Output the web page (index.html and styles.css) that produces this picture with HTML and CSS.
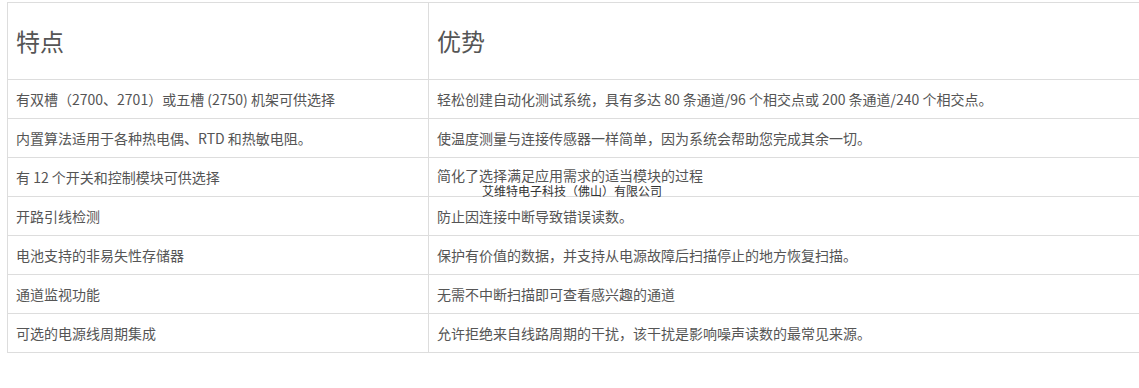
FILE: index.html
```html
<!DOCTYPE html>
<html lang="zh-CN">
<head>
<meta charset="utf-8">
<title>特点与优势</title>
<link rel="stylesheet" href="styles.css">
</head>
<body>
<table class="spec-table">
  <thead>
    <tr>
      <th class="col-feature">特点</th>
      <th class="col-benefit">优势</th>
    </tr>
  </thead>
  <tbody>
    <tr><td>有双槽（2700、2701）或五槽 (2750) 机架可供选择</td><td>轻松创建自动化测试系统，具有多达 80 条通道/96 个相交点或 200 条通道/240 个相交点。</td></tr>
    <tr><td>内置算法适用于各种热电偶、RTD 和热敏电阻。</td><td>使温度测量与连接传感器一样简单，因为系统会帮助您完成其余一切。</td></tr>
    <tr><td>有 12 个开关和控制模块可供选择</td><td class="has-mark">简化了选择满足应用需求的适当模块的过程<span class="watermark">艾维特电子科技（佛山）有限公司</span></td></tr>
    <tr><td>开路引线检测</td><td>防止因连接中断导致错误读数。</td></tr>
    <tr><td>电池支持的非易失性存储器</td><td>保护有价值的数据，并支持从电源故障后扫描停止的地方恢复扫描。</td></tr>
    <tr><td>通道监视功能</td><td>无需不中断扫描即可查看感兴趣的通道</td></tr>
    <tr><td>可选的电源线周期集成</td><td>允许拒绝来自线路周期的干扰，该干扰是影响噪声读数的最常见来源。</td></tr>
  </tbody>
</table>
</body>
</html>
```

FILE: styles.css
```css
html, body {
  margin: 0;
  padding: 0;
  background: #fff;
}

body {
  padding: 2px 0 0 7px;
  font-family: "Noto Sans CJK SC", "Microsoft YaHei", sans-serif;
  color: #555;
  overflow: hidden;
}

.spec-table {
  border-collapse: collapse;
  width: 1133px;
  table-layout: fixed;
}

.spec-table th,
.spec-table td {
  border: 1px solid #dddddd;
  text-align: left;
  vertical-align: middle;
}

.spec-table th {
  font-weight: normal;
  font-size: 24px;
  line-height: 36px;
  padding: 20px 8px;
  color: #555;
}

.col-feature {
  width: 404px;
}

.spec-table td {
  font-size: 14px;
  line-height: 22px;
  padding: 8px 8px;
  color: #555;
}

.spec-table td.has-mark {
  position: relative;
  vertical-align: top;
  line-height: 14px;
  padding: 10px 8px 14px;
}

.watermark {
  position: absolute;
  left: 53px;
  top: 27px;
  font-family: "Noto Sans CJK SC", serif;
  font-size: 12px;
  line-height: 11px;
  color: #333;
  white-space: nowrap;
}
```
